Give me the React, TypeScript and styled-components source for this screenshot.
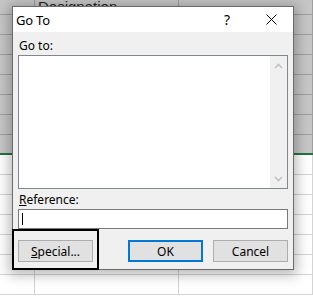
import React from "react";
import styled, { createGlobalStyle } from "styled-components";

const GlobalStyle = createGlobalStyle`
  html, body {
    margin: 0;
    padding: 0;
    width: 313px;
    height: 296px;
    overflow: hidden;
    background: #ffffff;
  }
`;

const Page = styled.div`
  position: relative;
  width: 313px;
  height: 296px;
  overflow: hidden;
`;

/* Spreadsheet behind the dialog */
const Sheet = styled.div`
  display: flex;
  flex-direction: column;
`;

interface RowProps {
  $selected?: boolean;
  $height: number;
  $green?: boolean;
}

const Row = styled.div<RowProps>`
  display: grid;
  grid-template-columns: 35px 144px 1fr;
  height: ${(p) => p.$height}px;
  box-sizing: border-box;
  background: ${(p) => (p.$selected ? "#c6c6c6" : "#ffffff")};
  border-bottom: ${(p) =>
    p.$green
      ? "2px solid #217346"
      : p.$selected
      ? "1px solid #9e9e9e"
      : "1px solid #d4d4d4"};
`;

const Cell = styled.div<{ $selected?: boolean }>`
  border-right: 1px solid ${(p) => (p.$selected ? "#9e9e9e" : "#d4d4d4")};
  font-family: "Liberation Sans", Arial, sans-serif;
  font-size: 15px;
  color: #222;
  padding-left: 3px;
  line-height: 14px;
  overflow: hidden;
  white-space: nowrap;
`;

/* Dialog */
const Dialog = styled.div`
  position: absolute;
  left: 12px;
  top: 6px;
  width: 282px;
  height: 264px;
  box-sizing: border-box;
  border: 1px solid #6b6b6b;
  background: #f0f0f0;
  box-shadow: 0 2px 12px 3px rgba(0, 0, 0, 0.28);
  display: flex;
  flex-direction: column;
  font-family: "Noto Sans", "Segoe UI", sans-serif;
  color: #000;
`;

const TitleBar = styled.div`
  height: 25px;
  background: #ffffff;
  display: flex;
  align-items: center;
  padding-left: 3px;
`;

const Title = styled.div`
  flex: 1;
  font-size: 13px;
  letter-spacing: -0.2px;
`;

const TitleButton = styled.div`
  width: 44px;
  height: 25px;
  display: flex;
  align-items: center;
  justify-content: center;
  font-size: 14px;
`;

const Body = styled.div`
  flex: 1;
  display: flex;
  flex-direction: column;
  padding: 6px 5px 0 5px;
`;

const Label = styled.div<{ $gap: number }>`
  height: 15px;
  line-height: 15px;
  font-size: 12px;
  padding-left: 1px;
  margin-top: ${(p) => p.$gap}px;
  margin-bottom: 2px;
`;

const ListBox = styled.div`
  height: 134px;
  box-sizing: border-box;
  border: 1px solid #828790;
  background: #ffffff;
  display: flex;
  justify-content: flex-end;
`;

const ScrollBar = styled.div`
  width: 17px;
  background: #f0f0f0;
  display: flex;
  flex-direction: column;
  justify-content: space-between;
  align-items: center;
  padding: 7px 0 6px;
`;

const Input = styled.div`
  height: 20px;
  box-sizing: border-box;
  border: 1px solid #7a7a7a;
  background: #ffffff;
  display: flex;
  align-items: center;
  padding-left: 3px;
`;

const Caret = styled.div`
  width: 1px;
  height: 12px;
  background: #000;
`;

const ButtonRow = styled.div`
  display: flex;
  justify-content: space-between;
  margin-top: 11px;
`;

const ButtonGroup = styled.div`
  display: flex;
  gap: 10px;
`;

const Button = styled.div<{ $default?: boolean }>`
  width: 75px;
  height: 22px;
  box-sizing: border-box;
  border: ${(p) => (p.$default ? "2px solid #0078d7" : "1px solid #adadad")};
  background: #e1e1e1;
  display: flex;
  align-items: center;
  justify-content: center;
  font-size: 12px;
`;

const Highlight = styled.div`
  position: absolute;
  left: 12px;
  top: 229px;
  width: 87px;
  height: 41px;
  box-sizing: border-box;
  border: 2px solid #000;
  pointer-events: none;
`;

const Chevron = ({ up }: { up?: boolean }) => (
  <svg width="9" height="6" viewBox="0 0 9 6">
    <path
      d={up ? "M1 5 L4.5 1.5 L8 5" : "M1 1 L4.5 4.5 L8 1"}
      fill="none"
      stroke="#c2c2c2"
      strokeWidth="1.6"
    />
  </svg>
);

const CloseIcon = () => (
  <svg width="11" height="11" viewBox="0 0 11 11">
    <path d="M0.5 0.5 L10.5 10.5 M10.5 0.5 L0.5 10.5" stroke="#000" strokeWidth="1" />
  </svg>
);

const rows: { h: number; sel: boolean; green?: boolean; text?: string }[] = [
  { h: 15, sel: true, text: "Designation" },
  { h: 20, sel: true },
  { h: 20, sel: true },
  { h: 20, sel: true },
  { h: 20, sel: true },
  { h: 20, sel: true },
  { h: 20, sel: true },
  { h: 20, sel: true, green: true },
  { h: 20, sel: false },
  { h: 20, sel: false },
  { h: 20, sel: false },
  { h: 20, sel: false },
  { h: 20, sel: false },
  { h: 20, sel: false },
  { h: 20, sel: false },
];

export default function App() {
  return (
    <Page>
      <GlobalStyle />
      <Sheet>
        {rows.map((r, i) => (
          <Row key={i} $height={r.h} $selected={r.sel} $green={r.green}>
            <Cell $selected={r.sel} />
            <Cell $selected={r.sel}>{r.text}</Cell>
            <Cell $selected={r.sel} />
          </Row>
        ))}
      </Sheet>

      <Dialog>
        <TitleBar>
          <Title>Go To</Title>
          <TitleButton>?</TitleButton>
          <TitleButton>
            <CloseIcon />
          </TitleButton>
        </TitleBar>
        <Body>
          <Label $gap={0}>Go to:</Label>
          <ListBox>
            <ScrollBar>
              <Chevron up />
              <Chevron />
            </ScrollBar>
          </ListBox>
          <Label $gap={3}>
            <u>R</u>eference:
          </Label>
          <Input>
            <Caret />
          </Input>
          <ButtonRow>
            <Button>
              <u>S</u>pecial...
            </Button>
            <ButtonGroup>
              <Button $default>OK</Button>
              <Button>Cancel</Button>
            </ButtonGroup>
          </ButtonRow>
        </Body>
      </Dialog>
      <Highlight />
    </Page>
  );
}
